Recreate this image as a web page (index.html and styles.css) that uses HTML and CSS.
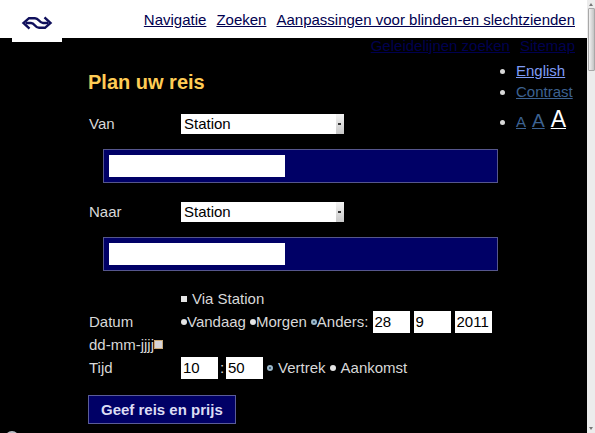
FILE: index.html
```html
<!DOCTYPE html>
<html lang="nl">
<head>
  <meta charset="UTF-8" />
  <meta name="viewport" content="width=device-width, initial-scale=1.0"/>
  <title>NS Reisplanner</title>
  <link rel="stylesheet" href="styles.css">
</head>
<body>
  <div class="page">
    <header class="header">
      <a class="logo" href="#" aria-label="NS">
        <svg width="32" height="14" viewBox="0 0 32 14" fill="none" stroke="#10105c" stroke-width="2.4" stroke-linejoin="miter">
          <path d="M8.5 12.6 L2.5 7 L8 2.2 H14 C18 2.2 18 7 22 7 H27" />
          <path d="M23.5 1.4 L29.5 7 L24 11.8 H18 C14 11.8 14 7 10 7 H5" />
        </svg>
      </a>
      <nav class="nav">
        <a href="#">Navigatie</a>
        <a href="#">Zoeken</a>
        <a href="#">Aanpassingen voor blinden-en slechtzienden</a>
        <a href="#">Geleidelijnen zoeken</a>
        <a href="#">Sitemap</a>
      </nav>
    </header>

    <div class="content">
      <main class="planner">
        <h1>Plan uw reis</h1>
        <form>
          <div class="row">
            <label for="van">Van</label>
            <select id="van"><option>Station</option></select>
          </div>
          <div class="box"><input type="text" class="station" aria-label="Van station"></div>

          <div class="row">
            <label for="naar">Naar</label>
            <select id="naar"><option>Station</option></select>
          </div>
          <div class="box"><input type="text" class="station" aria-label="Naar station"></div>

          <div class="row small">
            <span></span>
            <div class="fields wide">
              <input type="checkbox" id="via"><label for="via">Via Station</label>
            </div>
          </div>
          <div class="row small">
            <span>Datum</span>
            <div class="fields">
              <span class="option"><input type="radio" name="datum" id="vandaag"><label for="vandaag">Vandaag</label></span>
              <span class="option"><input type="radio" name="datum" id="morgen"><label for="morgen">Morgen</label></span>
              <span class="option"><input type="radio" name="datum" id="anders" checked><label for="anders">Anders:</label></span>
              <input type="text" class="num" value="28" aria-label="Dag">
              <input type="text" class="num" value="9" aria-label="Maand">
              <input type="text" class="num" value="2011" aria-label="Jaar">
            </div>
          </div>
          <div class="hint">dd-mm-jjjj<button type="button" class="calendar" aria-label="Kalender"></button></div>
          <div class="row small">
            <span>Tijd</span>
            <div class="fields">
              <span class="time">
                <input type="text" class="num" value="10" aria-label="Uur">
                <span class="colon">:</span>
                <input type="text" class="num" value="50" aria-label="Minuten">
              </span>
              <span class="option wide"><input type="radio" name="tijd" id="vertrek" checked><label for="vertrek">Vertrek</label></span>
              <span class="option wide"><input type="radio" name="tijd" id="aankomst"><label for="aankomst">Aankomst</label></span>
            </div>
          </div>
          <button type="submit" class="submit">Geef reis en prijs</button>
        </form>
      </main>

      <ul class="tools">
        <li><a class="english" href="#">English</a></li>
        <li><a href="#">Contrast</a></li>
        <li class="sizes">
          <span class="letters">
            <a class="size-s" href="#">A</a>
            <a class="size-m" href="#">A</a>
            <a class="size-l" href="#">A</a>
          </span>
        </li>
      </ul>
    </div>
    <span class="status-dot"></span>
  </div>

  <div class="scrollbar">
    <span class="arrow up"></span>
    <span class="thumb"></span>
    <span class="arrow down"></span>
  </div>
</body>
</html>
```

FILE: styles.css
```css
* {
  box-sizing: border-box;
}

body {
  margin: 0;
  display: grid;
  grid-template-columns: 1fr 8px;
  height: 100vh;
  overflow: hidden;
  background: #000;
  color: #d8d8d8;
  font-family: "Liberation Sans", Arial, sans-serif;
  font-size: 15px;
  line-height: 20px;
}

input, select, button {
  font: inherit;
  margin: 0;
}

.page {
  position: relative;
  overflow: hidden;
}

/* Header */
.header {
  position: relative;
  height: 38px;
  padding: 7px 12px 0 100px;
  background: #fff;
}

.logo {
  position: absolute;
  top: 0;
  left: 12px;
  width: 50px;
  height: 42px;
  padding: 16px 0 0 9px;
  background: #fff;
}

.logo svg {
  display: block;
}

/* The links wrap and run on below the white bar */
.nav {
  display: flex;
  flex-wrap: wrap;
  justify-content: flex-end;
  column-gap: 10px;
  line-height: 26px;
}

.nav a {
  color: #00004f;
}

/* Content */
.content {
  display: grid;
  grid-template-columns: 410px 1fr;
  padding: 22px 0 0 88px;
}

h1 {
  margin: 10px 0 20px;
  color: #fc5;
  font-size: 20px;
  line-height: 24px;
}

.row {
  display: grid;
  grid-template-columns: 92px 1fr;
  padding-left: 1px;
  line-height: 20px;
}

.row.small {
  min-height: 23px;
  line-height: 23px;
}

select {
  width: 163px;
  height: 20px;
  padding: 0 3px;
  appearance: none;
  border: 0;
  border-radius: 0;
  background:
    linear-gradient(#333, #333) right 3px center / 3px 2px no-repeat,
    linear-gradient(#f4f4f4, #c8c8c8) right / 8px 100% no-repeat,
    #fff;
  color: #000;
}

.box {
  height: 34px;
  margin: 15px 0 19px 15px;
  padding: 5px;
  border: 1px solid #55568c;
  background: #006;
}

.box + .small {
  margin-top: 16px;
}

.station {
  display: block;
  width: 176px;
  height: 22px;
  border: 0;
  background: #fff;
}

form {
  display: flow-root;
}

.row + .box:has(+ .small) {
  margin-bottom: 16px;
}

.fields {
  display: flex;
  align-items: center;
  gap: 4px;
  white-space: nowrap;
}

.option {
  display: flex;
  align-items: center;
}

.wide {
  gap: 5px;
}

.num {
  width: 37px;
  height: 22px;
  padding: 0 2px;
  border: 0;
  background: #fff;
  color: #000;
}

.time {
  display: flex;
  align-items: center;
}

.colon {
  width: 8px;
  text-align: center;
}

input[type="radio"], input[type="checkbox"] {
  appearance: none;
  width: 6px;
  height: 6px;
  background: #e4e4e4;
}

input[type="radio"] {
  border-radius: 50%;
}

input[type="radio"]:checked {
  border: 2px solid #9db8c8;
  background: #246;
}

.hint {
  display: flex;
  align-items: center;
  padding-left: 1px;
  line-height: 23px;
}

.calendar {
  width: 9px;
  height: 9px;
  padding: 0;
  border: 1px solid #c8a878;
  background: #d8d4d8;
}

.submit {
  height: 29px;
  margin-top: 16px;
  padding: 0 12px;
  border: 1px solid #5a5c98;
  background: #006;
  color: #dcdcf4;
  font-weight: bold;
}

/* Language, contrast and text size */
.tools {
  margin: 0;
  padding-left: 18px;
  line-height: 21px;
}

.tools a {
  color: #3d6291;
}

.tools .english {
  color: #7f9cf5;
}

.sizes {
  margin-top: 3px;
  line-height: 28px;
}

.letters {
  display: inline-flex;
  align-items: baseline;
  gap: 6px;
}

.tools .letters a {
  text-underline-offset: 1px;
  text-decoration-thickness: 1px;
}

.tools .size-m {
  font-size: 19px;
}

.tools .size-l {
  color: #fff;
  font-size: 23px;
}

.status-dot {
  position: absolute;
  left: 5px;
  bottom: -12px;
  width: 14px;
  height: 14px;
  border-radius: 50%;
  background: #b8bcc4;
}

/* Scrollbar */
.scrollbar {
  display: flex;
  flex-direction: column;
  align-items: center;
  padding: 3px 0;
  background: #ececec;
}

.thumb {
  width: 7px;
  height: 63px;
  margin: 2px 0 auto;
  border: 1px solid #a8a8a8;
  border-radius: 1px;
  background: linear-gradient(90deg, #f2f2f2, #c4c4c4);
}

.arrow {
  border: 2px solid transparent;
}

.up {
  border-top: 0;
  border-bottom: 3px solid #777;
}

.down {
  border-bottom: 0;
  border-top: 3px solid #777;
}
```
